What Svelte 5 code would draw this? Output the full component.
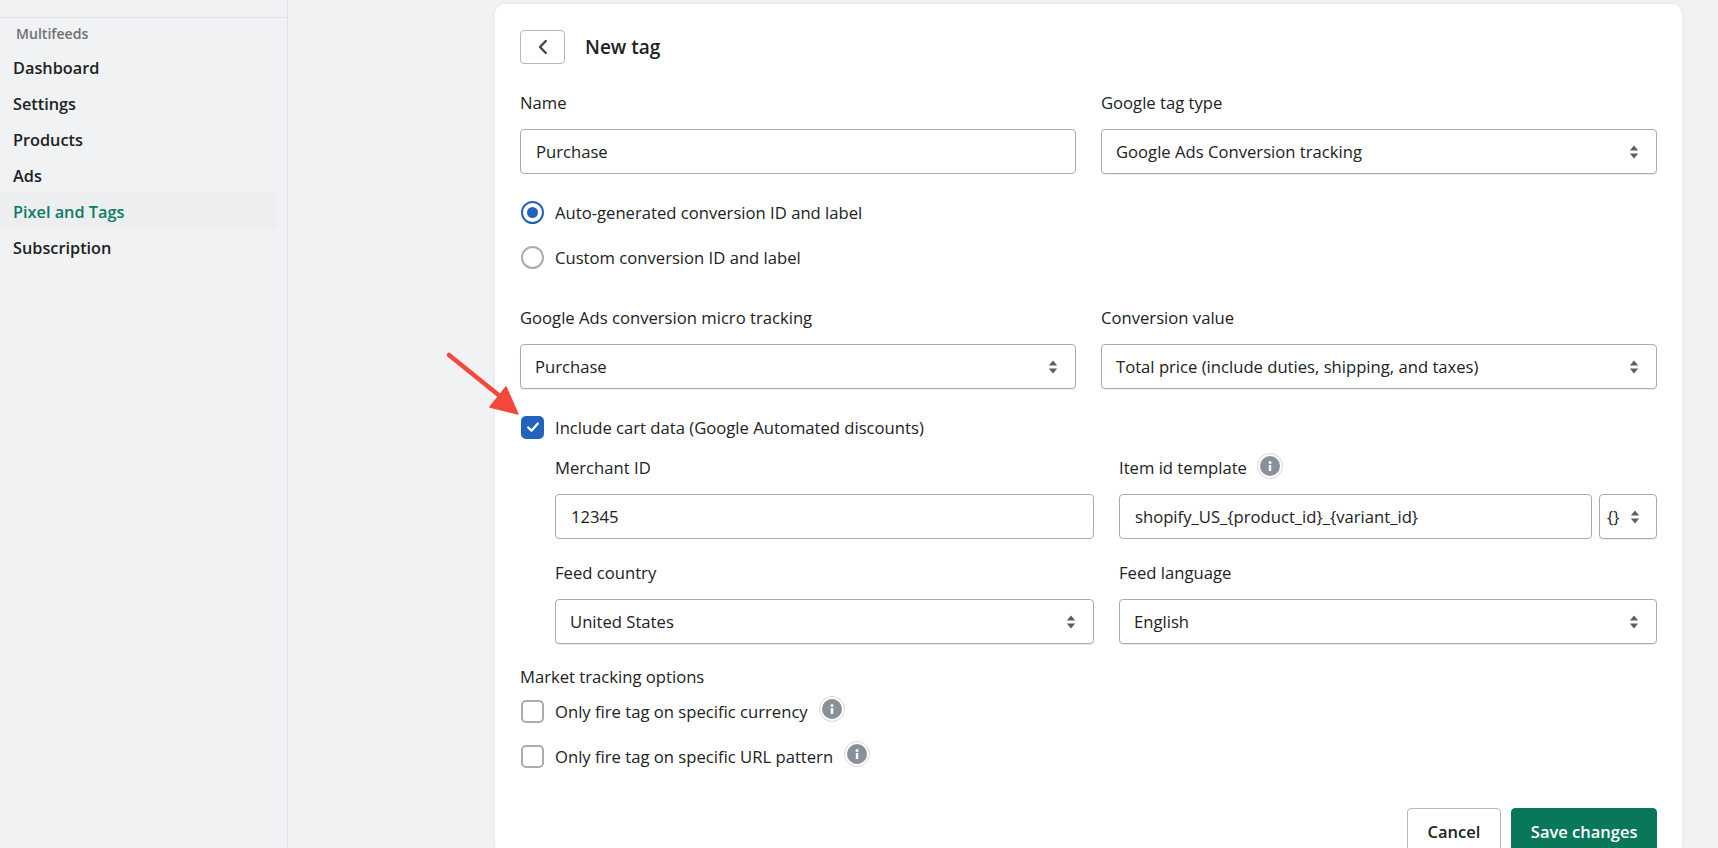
<script>
	const nav = ['Dashboard', 'Settings', 'Products', 'Ads', 'Pixel and Tags', 'Subscription'];
	const active = 'Pixel and Tags';
</script>

{#snippet arrows()}
	<svg class="arrows" width="10" height="14" viewBox="0 0 10 14"><path d="M5 0.5 9.2 5.5H0.8z M5 13.5 0.8 8.5H9.2z" fill="#5c5f62" /></svg>
{/snippet}

{#snippet info()}
	<span class="info">
		<svg width="20" height="20" viewBox="0 0 20 20">
			<circle cx="10" cy="10" r="10" fill="#8a8f9c" />
			<circle cx="10" cy="6.4" r="1.5" fill="#fff" />
			<rect x="8.8" y="9" width="2.4" height="6" rx="0.6" fill="#fff" />
		</svg>
	</span>
{/snippet}

{#snippet select(text)}
	<div class="control select"><span>{text}</span>{@render arrows()}</div>
{/snippet}

<div class="page">
	<aside class="sidebar">
		<div class="app-name">Multifeeds</div>
		<nav>
			{#each nav as item}
				<div class="nav-item" class:active={item === active}>{item}</div>
			{/each}
		</nav>
	</aside>

	<main>
		<section class="card">
			<header>
				<button class="back" aria-label="Back">
					<svg width="12" height="16" viewBox="0 0 12 16"><path d="M8.8 2 3 8l5.8 6" fill="none" stroke="#44474a" stroke-width="2.4" stroke-linecap="round" stroke-linejoin="round" /></svg>
				</button>
				<h1>New tag</h1>
			</header>

			<div class="cols name-row">
				<div>
					<div class="label">Name</div>
					<div class="control">Purchase</div>
				</div>
				<div>
					<div class="label">Google tag type</div>
					{@render select('Google Ads Conversion tracking')}
				</div>
			</div>

			<div class="radios">
				<div class="option"><span class="radio on"></span>Auto-generated conversion ID and label</div>
				<div class="option"><span class="radio"></span>Custom conversion ID and label</div>
			</div>

			<div class="cols micro-row">
				<div>
					<div class="label">Google Ads conversion micro tracking</div>
					{@render select('Purchase')}
				</div>
				<div>
					<div class="label">Conversion value</div>
					{@render select('Total price (include duties, shipping, and taxes)')}
				</div>
			</div>

			<div class="option cart">
				<span class="check on">
					<svg width="16" height="16" viewBox="0 0 14 14"><path d="M2.8 7.4 5.7 10.2 11.2 4" fill="none" stroke="#fff" stroke-width="2" stroke-linecap="round" stroke-linejoin="round" /></svg>
				</span>
				Include cart data (Google Automated discounts)
			</div>

			<div class="cart-fields">
				<div>
					<div class="label">Merchant ID</div>
					<div class="control">12345</div>
				</div>
				<div>
					<div class="label with-info">Item id template {@render info()}</div>
					<div class="template">
						<div class="control grow">{'shopify_US_{product_id}_{variant_id}'}</div>
						<div class="control select small"><span>{'{}'}</span>{@render arrows()}</div>
					</div>
				</div>
				<div>
					<div class="label">Feed country</div>
					{@render select('United States')}
				</div>
				<div>
					<div class="label">Feed language</div>
					{@render select('English')}
				</div>
			</div>

			<div class="label market">Market tracking options</div>
			<div class="market-options">
				<div class="option"><span class="check"></span>Only fire tag on specific currency {@render info()}</div>
				<div class="option"><span class="check"></span>Only fire tag on specific URL pattern {@render info()}</div>
			</div>

			<footer>
				<button class="btn">Cancel</button>
				<button class="btn primary">Save changes</button>
			</footer>
		</section>

		<svg class="pointer" width="80" height="66" viewBox="0 0 80 66">
			<path d="M4 3 56 45" stroke="#f4483c" stroke-width="4.5" stroke-linecap="round" />
			<path d="M73 62 45 55 61 35z" fill="#f4483c" stroke="#f4483c" stroke-width="1.5" stroke-linejoin="round" />
		</svg>
	</main>
</div>

<style>
	:global(body) {
		background: #f1f2f4;
		overflow: hidden;
	}

	.page {
		display: flex;
		height: 848px;
		overflow: hidden;
		font-family: 'Open Sans', 'Noto Sans', sans-serif;
		font-size: 16.65px;
		color: #202223;
	}

	.sidebar {
		width: 288px;
		flex: none;
		box-sizing: border-box;
		border-right: 1px solid #dfe1e4;
		padding-top: 17px;
	}

	.app-name {
		border-top: 1px solid #dfe1e4;
		padding: 6px 0 0 16px;
		font-size: 14.1px;
		line-height: 20px;
		font-weight: 600;
		color: #6d7175;
	}

	nav {
		margin-top: 5px;
		padding-right: 10px;
	}

	.nav-item {
		height: 36px;
		line-height: 38px;
		padding-left: 13px;
		font-size: 16.3px;
		font-weight: 600;
		border-radius: 0 4px 4px 0;
	}

	.nav-item.active {
		color: #0a7d62;
		background: #edeef0;
	}

	main {
		position: relative;
		flex: 1;
		padding: 4px 36px 0 207px;
	}

	.card {
		background: #fff;
		border-radius: 10px;
		padding: 26px 25px 0;
		box-shadow: 0 0 5px rgba(23, 24, 24, 0.06);
	}

	header {
		display: flex;
		align-items: center;
		gap: 20px;
		height: 35px;
	}

	.back {
		width: 45px;
		height: 34px;
		margin-top: -1px;
		display: flex;
		align-items: center;
		justify-content: center;
		background: #fff;
		border: 1px solid #b5b7ba;
		border-radius: 4px;
		padding: 0;
	}

	h1 {
		margin: 0 0 1px;
		font-size: 19px;
		font-weight: 600;
	}

	.cols {
		display: grid;
		grid-template-columns: 1fr 1fr;
		gap: 25px;
	}

	.name-row {
		margin-top: 27px;
	}

	.micro-row {
		margin-top: 38px;
	}

	.label {
		line-height: 22px;
		margin-bottom: 15px;
	}

	.control {
		box-sizing: border-box;
		height: 45px;
		display: flex;
		align-items: center;
		padding: 0 15px;
		background: #fff;
		border: 1px solid #a9acaf;
		border-radius: 4px;
		white-space: nowrap;
	}

	.select {
		justify-content: space-between;
		padding-left: 14px;
		box-shadow: 0 1px 1px rgba(22, 29, 37, 0.08);
	}

	.arrows {
		flex: none;
		margin-right: 2px;
	}

	.radios {
		display: flex;
		flex-direction: column;
		gap: 21px;
		margin-top: 26px;
	}

	.option {
		display: flex;
		align-items: center;
		height: 24px;
		white-space: nowrap;
	}

	.radio,
	.check {
		box-sizing: border-box;
		width: 23px;
		height: 23px;
		margin: 0 11px 0 1px;
		flex: none;
		display: flex;
		align-items: center;
		justify-content: center;
		background: #fff;
		border: 2px solid #a9acb3;
	}

	.radio {
		border-radius: 50%;
	}

	.radio.on {
		border-color: #2463bc;
	}

	.radio.on::after {
		content: '';
		width: 11px;
		height: 11px;
		border-radius: 50%;
		background: #2463bc;
	}

	.check {
		border-radius: 5px;
	}

	.check.on {
		background: #2463bc;
		border-color: #2463bc;
	}

	.cart {
		margin-top: 26px;
	}

	.cart-fields {
		display: grid;
		grid-template-columns: 539px 538px;
		column-gap: 25px;
		row-gap: 23px;
		margin-top: 18px;
		margin-left: 35px;
	}

	.with-info {
		display: flex;
		align-items: center;
		gap: 10px;
	}

	.info {
		flex: none;
		display: inline-flex;
		padding: 2px;
		background: #fff;
		border: 1px solid #d5d7da;
		border-radius: 50%;
		margin-top: -5px;
		margin-left: 11px;
	}

	.with-info .info {
		margin-left: 0;
	}

	.template {
		display: flex;
		gap: 7px;
	}

	.grow {
		flex: 1;
	}

	.small {
		width: 58px;
		flex: none;
		padding: 0 0 0 7px;
	}

	.small .arrows {
		margin-right: 16px;
	}

	.market {
		margin: 22px 0 0;
	}

	.market-options {
		display: flex;
		flex-direction: column;
		gap: 21px;
		margin-top: 11px;
	}

	footer {
		display: flex;
		justify-content: flex-end;
		gap: 10px;
		margin-top: 40px;
	}

	.btn {
		height: 46px;
		padding: 0 18.5px;
		background: #fff;
		border: 1px solid #b5b7ba;
		border-radius: 4px;
		font: 600 16.5px 'Open Sans', 'Noto Sans', sans-serif;
		color: #202223;
	}

	.btn:first-child {
		padding: 0 20px;
	}

	.btn.primary {
		background: #08775a;
		border-color: #08775a;
		color: #fff;
	}

	.pointer {
		position: absolute;
		left: 157px;
		top: 352px;
	}
</style>
